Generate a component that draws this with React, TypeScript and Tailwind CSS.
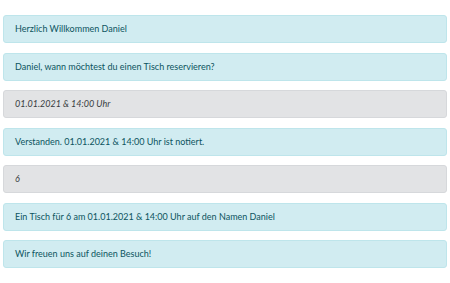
import React from "react";

const items: { text: string; user?: boolean }[] = [
  { text: "Herzlich Willkommen Daniel" },
  { text: "Daniel, wann möchtest du einen Tisch reservieren?" },
  { text: "01.01.2021 & 14:00 Uhr", user: true },
  { text: "Verstanden. 01.01.2021 & 14:00 Uhr ist notiert." },
  { text: "6", user: true },
  { text: "Ein Tisch für 6 am 01.01.2021 & 14:00 Uhr auf den Namen Daniel" },
  { text: "Wir freuen uns auf deinen Besuch!" },
];

export default function App() {
  return (
    <div
      className="w-[450px] h-[283px] bg-white pt-[15px] px-[3px] flex flex-col gap-[9.5px]"
      style={{ fontFamily: "Lato, 'Open Sans', sans-serif" }}
    >
      {items.map((it, i) =>
        it.user ? (
          <div
            key={i}
            className="h-[28px] flex items-center px-[11px] rounded-[3px] border border-[#d6d8db] bg-[#e2e3e5] text-[#383d41] text-[9px] italic"
          >
            {it.text}
          </div>
        ) : (
          <div
            key={i}
            className="h-[28px] flex items-center px-[11px] rounded-[3px] border border-[#bee5eb] bg-[#d1ecf1] text-[#0c5460] text-[9px]"
          >
            {it.text}
          </div>
        )
      )}
    </div>
  );
}
